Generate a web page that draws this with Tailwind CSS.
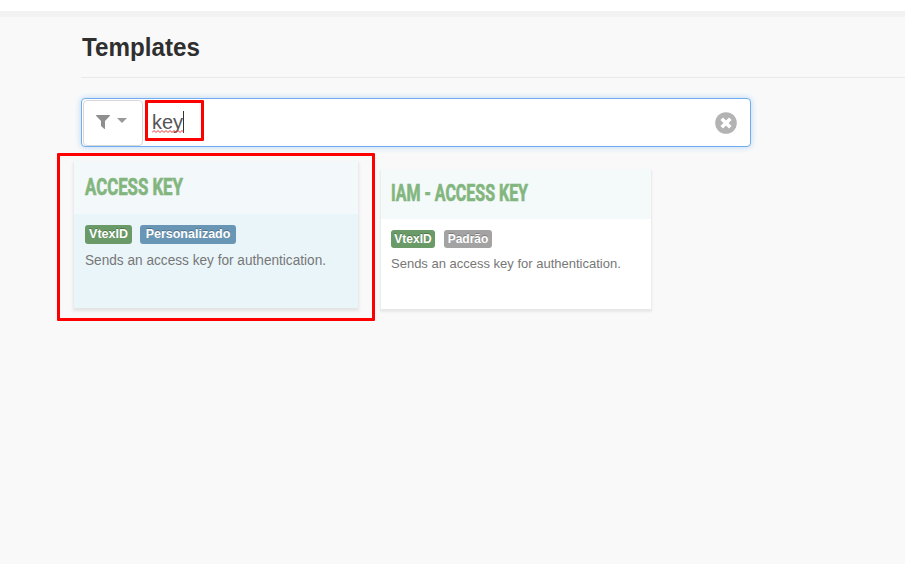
<!DOCTYPE html>
<html lang="pt">
<head>
<meta charset="utf-8">
<title>Templates</title>
<script src="https://cdn.jsdelivr.net/npm/@tailwindcss/browser@4"></script>
</head>
<body class="h-[564px] overflow-hidden bg-[#f9f9f9] font-['Liberation_Sans',Arial,sans-serif]">
<header class="h-[17px] border-b-[6px] border-[#f2f2f2] bg-white"></header>
<main>
  <h1 class="ml-[81px] h-[61px] border-b border-[#e9e9e9] pt-[15px] pl-px text-[25px] leading-[30px] font-bold text-[#2f2f2f]"><span class="inline-block origin-left scale-x-[0.968]">Templates</span></h1>
  <div class="mt-5 ml-[81px] flex h-[49px] w-[670px] items-start rounded-[4px] border border-[#6fadf0] bg-white px-px pt-px shadow-[0_0_6px_rgba(82,168,236,0.4)]">
    <button class="flex h-[46px] w-[60px] items-center rounded-[4px] border border-[#d8d8d8] pl-[12px]">
      <svg class="-mt-[2px] h-[14px] w-[14px]" viewBox="0 0 14 14" fill="#8f8f8f"><path d="M.6 0h12.8c.6 0 .8.6.4 1L9 6v7.4c0 .5-.5.7-.9.4L5.3 11.300c-.2-.2-.3-.3-.3-.6V6L.2 1C-.2.6 0 0 .6 0z"/></svg>
      <svg class="-mt-[5px] ml-[7px] h-[5px] w-[10px]" viewBox="0 0 10 5" fill="#999"><path d="M0 0h10L5 5z"/></svg>
    </button>
    <div class="ml-[2px] h-[41px] w-[59px] rounded-[1px] border-3 border-[#ff0000] pt-[6px] pl-[4px]">
      <div class="relative flex h-[25px] items-start text-[20px] leading-[26px] text-[#555]"><span>key</span><span class="mt-[2px] h-[22px] w-px bg-[#333]"></span>
        <svg class="absolute top-[21px] left-0 h-[3px] w-[32px]" viewBox="0 0 32 3" fill="none" stroke="#e33" stroke-width="1"><path d="M0 2.500l2-2 2 2 2-2 2 2 2-2 2 2 2-2 2 2 2-2 2 2 2-2 2 2 2-2 2 2 2-2 2 2"/></svg>
      </div>
    </div>
    <svg class="mt-[12px] mr-[12px] ml-auto h-[22px] w-[22px]" viewBox="0 0 22 22"><circle cx="11" cy="11" r="10.800" fill="#b3b3b3"/><path d="M6.700 6.700l8.600 8.600M15.300 6.700l-8.600 8.600" stroke="#fff" stroke-width="3.600"/></svg>
  </div>
  <section class="mt-[6px] ml-[57px] flex items-start">
    <div class="h-[168px] w-[318px] rounded-[1px] border-3 border-[#ff0000] pt-[5px] pl-[14px]">
      <article class="h-[147px] w-[284px] bg-[#eaf5fa] shadow-[0_2px_3px_1px_rgba(0,0,0,0.09)]">
        <div class="h-[53px] bg-[#f3f8fa] pt-[11px] pl-[11px]"><h2 class="inline-block origin-left scale-x-[0.700] font-['Roboto',sans-serif] text-[24px] leading-[30px] font-bold whitespace-nowrap text-[#83b67f] [-webkit-text-stroke:0.7px_#83b67f]">ACCESS KEY</h2></div>
        <div class="pt-[11px] pl-[11px]">
          <div class="flex gap-2 text-[12.500px] leading-[19px] font-bold text-white [text-shadow:0_-1px_0_rgba(0,0,0,0.25)]"><span class="h-[19px] w-[47px] rounded-[3px] bg-[#6a9a67] text-center">VtexID</span><span class="h-[19px] w-[96px] rounded-[3px] bg-[#6996b5] text-center">Personalizado</span></div>
          <p class="mt-[6px] text-[14px] leading-5 whitespace-nowrap text-[#777]"><span class="inline-block origin-left scale-x-[0.974]">Sends an access key for authentication.</span></p>
        </div>
      </article>
    </div>
    <article class="mt-4 ml-[6px] h-[140px] w-[270px] bg-white shadow-[0_2px_2px_1px_rgba(0,0,0,0.07)]">
      <div class="h-[50px] bg-[#f4fafa] pt-[10px] pl-[10px]"><h2 class="inline-block origin-left scale-x-[0.695] font-['Roboto',sans-serif] text-[23px] leading-[30px] font-bold whitespace-nowrap text-[#83b67f] [-webkit-text-stroke:0.7px_#83b67f]">IAM - ACCESS KEY</h2></div>
      <div class="pt-[11px] pl-[10px]">
        <div class="flex gap-[9px] text-[12px] leading-[18px] font-bold text-white [text-shadow:0_-1px_0_rgba(0,0,0,0.25)]"><span class="h-[18px] w-[44px] rounded-[3px] bg-[#6a9a67] text-center">VtexID</span><span class="h-[18px] w-[48px] rounded-[3px] bg-[#a3a3a3] text-center">Padrão</span></div>
        <p class="mt-[6px] text-[13px] leading-5 whitespace-nowrap text-[#777]"><span class="inline-block origin-left">Sends an access key for authentication.</span></p>
      </div>
    </article>
  </section>
</main>
</body>
</html>
